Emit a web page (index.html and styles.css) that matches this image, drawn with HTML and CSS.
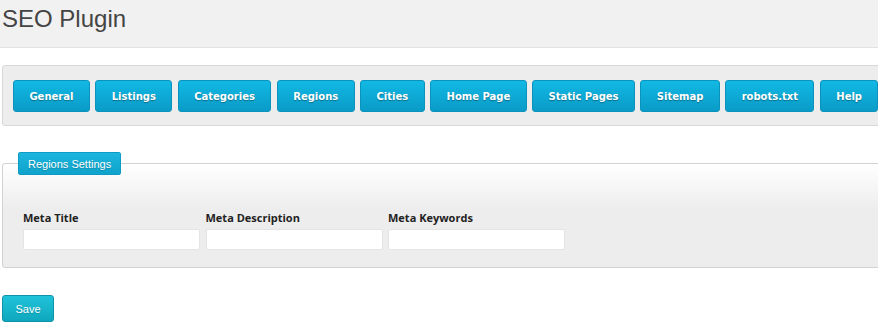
FILE: index.html
```html
<!DOCTYPE html>
<html lang="en">
<head>
<meta charset="utf-8">
<title>SEO Plugin</title>
<link rel="stylesheet" href="styles.css">
</head>
<body>
<header class="page-header">
  <h1 class="page-title">SEO Plugin</h1>
</header>
<main class="content">
  <nav class="tab-panel">
    <a class="tab-btn" href="#">General</a>
    <a class="tab-btn" href="#">Listings</a>
    <a class="tab-btn" href="#">Categories</a>
    <a class="tab-btn" href="#">Regions</a>
    <a class="tab-btn" href="#">Cities</a>
    <a class="tab-btn" href="#">Home Page</a>
    <a class="tab-btn" href="#">Static Pages</a>
    <a class="tab-btn" href="#">Sitemap</a>
    <a class="tab-btn" href="#">robots.txt</a>
    <a class="tab-btn" href="#">Help</a>
  </nav>
  <form class="settings-form">
    <fieldset class="settings">
      <legend class="settings-legend">Regions Settings</legend>
      <div class="fields">
        <label class="field">
          <span class="field-label">Meta Title</span>
          <input class="field-input" type="text">
        </label>
        <label class="field">
          <span class="field-label">Meta Description</span>
          <input class="field-input" type="text">
        </label>
        <label class="field">
          <span class="field-label">Meta Keywords</span>
          <input class="field-input" type="text">
        </label>
      </div>
    </fieldset>
    <button class="save-btn" type="button">Save</button>
  </form>
</main>
</body>
</html>
```
FILE: styles.css
```css
html, body {
  margin: 0;
  padding: 0;
  overflow: hidden;
  background: #ffffff;
  font-family: "Liberation Sans", Arial, sans-serif;
}

.page-header {
  height: 47px;
  background: #f1f1f1;
  border-bottom: 1px solid #e2e2e2;
  box-sizing: content-box;
}

.page-title {
  margin: 0;
  padding: 5px 0 0 2px;
  font-size: 24px;
  line-height: 28px;
  font-weight: normal;
  color: #444444;
}

.content {
  padding: 17px 0 0 2px;
  width: 920px;
}

.tab-panel {
  display: flex;
  gap: 5.5px;
  padding: 14px 10px 13px 10px;
  background: #ededed;
  border: 1px solid #d8d8d8;
  border-radius: 3px;
}

.tab-btn {
  display: flex;
  align-items: center;
  height: 30px;
  padding: 0 15.4px;
  font-family: "DejaVu Sans", Verdana, sans-serif;
  font-size: 10px;
  font-weight: bold;
  color: #ffffff;
  text-decoration: none;
  text-shadow: 0 1px 1px rgba(0, 0, 0, 0.35);
  white-space: nowrap;
  background: linear-gradient(#12b8e4, #0a9bc7);
  border: 1px solid #0b93bd;
  border-radius: 3px;
}

.settings-form {
  margin: 0;
}

.settings {
  margin: 26px 0 0 0;
  padding: 35px 20px 17px 20px;
  border: 1px solid #d2d2d2;
  border-radius: 3px;
  background: linear-gradient(#ffffff 0, #ededed 45px, #ededed 100%);
  min-inline-size: 0;
}

.settings-legend {
  margin-left: -5px;
  padding: 0 9px;
  height: 23px;
  line-height: 23px;
  box-sizing: border-box;
  font-size: 11px;
  color: #ffffff;
  text-shadow: 0 1px 1px rgba(0, 0, 0, 0.2);
  background: linear-gradient(#1cb6de, #10a3cb);
  border: 1px solid #0f9cc4;
  border-radius: 2px;
}

.fields {
  display: flex;
  gap: 5.5px;
}

.field {
  display: flex;
  flex-direction: column;
  width: 177px;
}

.field-label {
  font-family: "Open Sans", sans-serif;
  font-size: 11px;
  font-weight: bold;
  line-height: 15px;
  color: #222222;
  margin-bottom: 4px;
}

.field-input {
  box-sizing: border-box;
  width: 177px;
  height: 21px;
  margin: 0;
  padding: 2px 4px;
  border: 1px solid #e4e4e4;
  border-radius: 2px;
  background: #ffffff;
  outline: none;
}

.save-btn {
  display: block;
  margin-top: 27px;
  width: 52px;
  height: 27px;
  padding: 0;
  font-family: "Liberation Sans", Arial, sans-serif;
  font-size: 11px;
  color: #ffffff;
  text-shadow: 0 1px 1px rgba(0, 0, 0, 0.15);
  background: linear-gradient(#20c3da, #0fa7bd);
  border: 1px solid #0e93a8;
  border-radius: 3px;
}
```
